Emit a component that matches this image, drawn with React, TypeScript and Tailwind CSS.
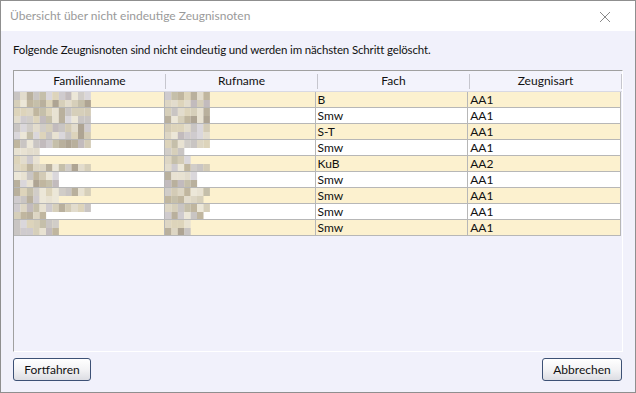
import React from "react";

type Row = { fam: number[]; ruf: number[]; fach: string; art: string };

const rows: Row[] = [
  { fam: [12, 12], ruf: [7, 7], fach: "B", art: "AA1" },
  { fam: [12, 12], ruf: [7, 7], fach: "Smw", art: "AA1" },
  { fam: [12, 12], ruf: [7, 7], fach: "S-T", art: "AA1" },
  { fam: [12, 4], ruf: [7, 3], fach: "Smw", art: "AA1" },
  { fam: [4, 12], ruf: [4, 7], fach: "KuB", art: "AA2" },
  { fam: [7, 7], ruf: [5, 5], fach: "Smw", art: "AA1" },
  { fam: [12, 7], ruf: [7, 6], fach: "Smw", art: "AA1" },
  { fam: [12, 5], ruf: [7, 6], fach: "Smw", art: "AA1" },
  { fam: [7, 7], ruf: [4, 4], fach: "Smw", art: "AA1" },
];

const palette = [
  "#d3cbb6", "#c5bfaa", "#ddd6c4", "#cfcbce", "#c2bbbd", "#e2dccd",
  "#b9b09d", "#d6cfba", "#e8e2d2", "#c9c5c3", "#dad7db", "#c0b69f",
  "#ece7d8", "#d1cdc8", "#aea493", "#ddd4bb",
];

function seeded(n: number) {
  const x = Math.sin(n * 12.9898 + 78.233) * 43758.5453;
  return x - Math.floor(x);
}

// blurred/pixelated name placeholder
function Mosaic({ widths, seed }: { widths: number[]; seed: number }) {
  return (
    <svg width="80" height="16" className="block">
      {widths.map((count, r) =>
        Array.from({ length: count }).map((_, i) => (
          <rect
            key={`${r}-${i}`}
            x={i * 6.4}
            y={r * 8}
            width={6.5}
            height={8}
            fill={palette[Math.floor(seeded(seed * 31 + r * 13 + i) * palette.length)]}
          />
        ))
      )}
    </svg>
  );
}

function DlgButton({ children, className }: { children: React.ReactNode; className?: string }) {
  return (
    <button
      className={`h-[23px] rounded-[3px] border border-[#3d5175] bg-gradient-to-b from-white via-[#f3f3f5] to-[#dcdde3] text-[12px] text-[#111] ${className ?? ""}`}
    >
      {children}
    </button>
  );
}

export default function App() {
  const cols = ["Familienname", "Rufname", "Fach", "Zeugnisart"];
  return (
    <div
      className="flex h-[393px] w-[636px] flex-col overflow-hidden border border-[#8f8f8f] bg-[#f1f1fb] text-[12px] text-[#111]"
      style={{ fontFamily: 'Lato, "Noto Sans", sans-serif' }}
    >
      <div className="flex h-[30px] shrink-0 items-center justify-between bg-white pl-[9px] pr-[24px]">
        <span className="text-[12px] text-[#9a9a9a]">Übersicht über nicht eindeutige Zeugnisnoten</span>
        <svg width="12" height="12" viewBox="0 0 12 12" className="mt-[1px]">
          <path d="M1 1 L11 11 M11 1 L1 11" stroke="#8a8a8a" strokeWidth="1" />
        </svg>
      </div>

      <div className="flex flex-1 flex-col px-[12px] pt-[10px]">
        <p className="h-[29px] text-[11.5px] leading-[18px] tracking-[-0.15px]">
          Folgende Zeugnisnoten sind nicht eindeutig und werden im nächsten Schritt gelöscht.
        </p>

        <div className="flex h-[282px] flex-col border-l border-t border-[#a0a0a0] border-b-white border-r-white border-b border-r">
          <div className="flex h-[21px] shrink-0 items-center border-b border-[#d9d9e3] bg-[#f3f3fc]">
            {cols.map((c) => (
              <div
                key={c}
                className="flex h-[15px] flex-1 items-center justify-center border-r border-[#c6c6ce] text-[12px]"
              >
                {c}
              </div>
            ))}
          </div>
          <div className="flex flex-col pr-[1px]">
            {rows.map((r, i) => (
              <div
                key={i}
                className={`flex h-[16px] border-b border-[#b7b7b7] text-[12px] leading-[15px] ${i % 2 === 0 ? "bg-[#fcf1cf]" : "bg-white"}`}
              >
                <div className="flex-1 overflow-hidden border-r border-[#b7b7b7]">
                  <Mosaic widths={r.fam} seed={i + 1} />
                </div>
                <div className="flex-1 overflow-hidden border-r border-[#b7b7b7]">
                  <Mosaic widths={r.ruf} seed={i + 50} />
                </div>
                <div className="flex-1 border-r border-[#b7b7b7] pl-[2px]">{r.fach}</div>
                <div className="flex-1 border-r border-[#b7b7b7] pl-[2px]">{r.art}</div>
              </div>
            ))}
          </div>
        </div>

        <div className="mt-[6px] flex justify-between pr-[1px]">
          <DlgButton className="w-[78px]">Fortfahren</DlgButton>
          <DlgButton className="w-[80px]">Abbrechen</DlgButton>
        </div>
      </div>
    </div>
  );
}
